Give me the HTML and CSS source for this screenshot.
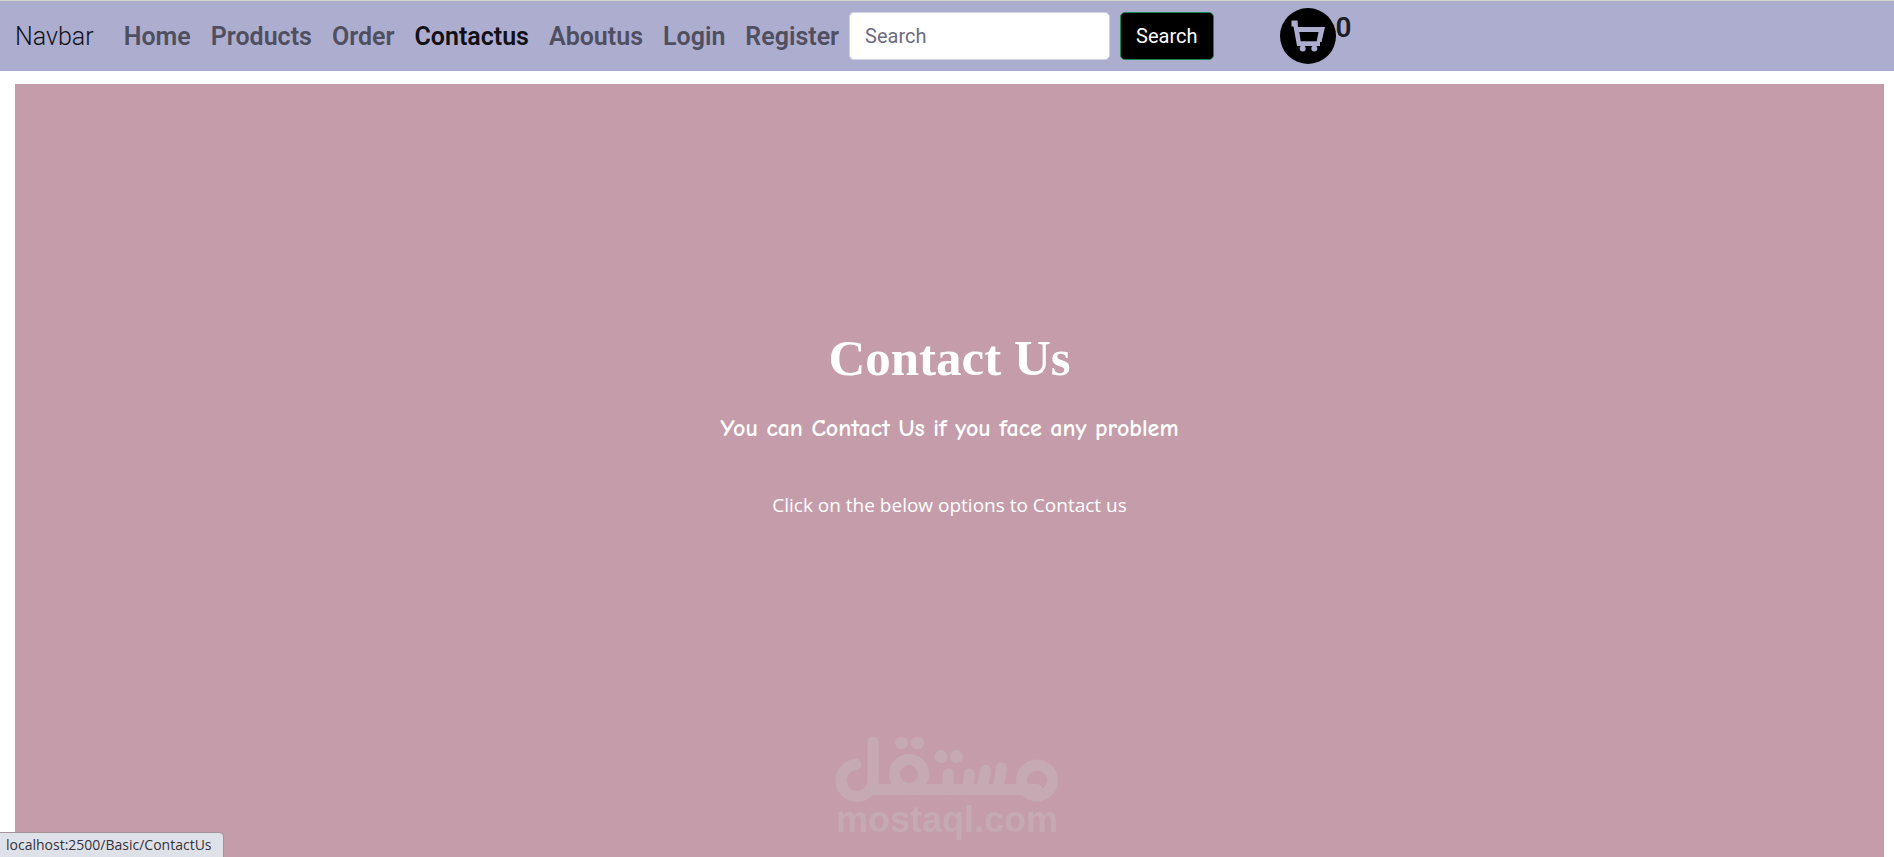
FILE: index.html
```html
<!DOCTYPE html>
<html lang="en">
<head>
<meta charset="utf-8">
<title>Contact Us</title>
<link rel="stylesheet" href="styles.css">
</head>
<body>
<header class="navbar">
  <a class="brand" href="#">Navbar</a>
  <nav class="links">
    <a href="#">Home</a>
    <a href="#">Products</a>
    <a href="#">Order</a>
    <a class="active" href="#">Contactus</a>
    <a href="#">Aboutus</a>
    <a href="#">Login</a>
    <a href="#">Register</a>
  </nav>
  <form class="search">
    <input type="search" placeholder="Search" aria-label="Search">
    <button type="button">Search</button>
  </form>
  <a class="cart" href="#" aria-label="Cart">
    <svg width="56" height="56" viewBox="0 0 56 56">
      <circle cx="28" cy="28" r="28" fill="#000"/>
      <path d="M11.500 12.500H17.500L18 19H45L41.500 34H40V38H17L13.500 18.500H11.500Z" fill="#adadd0"/>
      <path d="M19.300 24H38.500L36.700 33.300H20.700Z" fill="#000"/>
      <circle cx="22.700" cy="40.500" r="3" fill="#adadd0"/>
      <circle cx="34.300" cy="40.500" r="3" fill="#adadd0"/>
    </svg>
    <span class="count">0</span>
  </a>
</header>
<main class="hero">
  <h1>Contact Us</h1>
  <p class="lead">You can Contact Us if you face any problem</p>
  <p class="hint">Click on the below options to Contact us</p>
</main>
<div class="mark">
  <svg width="224" height="66" viewBox="0 0 224 66" fill="none" stroke="#c5aab3" stroke-width="11" stroke-linecap="round" stroke-linejoin="round" role="img" aria-label="مستقل">
    <path d="M21 28.500A16 16 0 1 0 38 44V6"/>
    <path d="M36 53.500H202"/>
    <circle cx="74" cy="38" r="14.500"/>
    <path d="M113.500 38L112.500 52M134.500 38L132.500 52M150.500 34.500L147.500 52M166.500 32L163.500 52"/>
    <circle cx="202" cy="44.500" r="15.500"/>
    <g fill="#c5aab3" stroke="none">
      <circle cx="66.500" cy="7" r="6.500"/>
      <circle cx="82.500" cy="7" r="6.500"/>
      <circle cx="106" cy="20.500" r="6.500"/>
      <circle cx="121.500" cy="20.500" r="6.500"/>
    </g>
  </svg>
  <span>mostaql.com</span>
</div>
<div class="status">localhost:2500/Basic/ContactUs</div>
</body>
</html>
```
FILE: styles.css
```css
* { box-sizing: border-box; }
html { height: 100%; }
body {
  margin: 0;
  min-height: 100%;
  display: flex;
  flex-direction: column;
  background: #fff;
  font-family: Roboto, sans-serif;
  font-size: 20px;
}
a { text-decoration: none; color: inherit; }
.navbar {
  display: flex;
  align-items: center;
  height: 71px;
  padding: 0 15px;
  border-top: 1px solid #d6d6d0;
  background: #adadd0;
}
.brand {
  margin-right: 20px;
  font-size: 25px;
  font-weight: 300;
  color: #111116;
}
.links { display: flex; }
.links a {
  padding: 0 10px;
  font-size: 25px;
  font-weight: 600;
  color: #4f4f60;
}
.links .active { color: #111116; }
.search { display: flex; gap: 10px; }
.search input,
.search button {
  height: 48px;
  padding: 0 15px;
  border-radius: 5px;
  font: 400 20px Roboto, sans-serif;
}
.search input {
  width: 261px;
  border: 1px solid #ced4da;
  background: #fff;
}
.search input::placeholder { color: #6c6c80; opacity: 1; }
.search button {
  border: 1px solid #198754;
  background: #000;
  color: #fff;
}
.cart {
  display: flex;
  margin-left: 66px;
}
.count {
  padding-top: 4px;
  font-size: 28px;
  line-height: 32px;
  font-weight: 600;
  color: #1d1d26;
}
.hero {
  flex: 1;
  margin: 13px 10px 0 15px;
  padding-top: 239px;
  background: #c59daa;
  color: #fff;
  text-align: center;
}
.hero h1 {
  margin: 0;
  font: 700 51px/70px "Liberation Serif", serif;
}
.lead {
  margin: 17px 0 0;
  font: 700 24px/36px "Comic Sans MS", "Comic Neue", "Open Sans", sans-serif;
}
.hint {
  margin: 44px 0 0;
  font: 400 19px/30px "Open Sans", sans-serif;
}
/* Watermark over the page, centred on the window */
.mark {
  position: fixed;
  left: 0;
  right: 0;
  bottom: 20px;
  display: flex;
  flex-direction: column;
  align-items: center;
  color: #c5aab3;
  pointer-events: none;
}
.mark span { font: 700 36px/35px "Liberation Sans", sans-serif; }
.status {
  position: fixed;
  left: 0;
  bottom: 0;
  padding: 0 11px 0 6px;
  border: solid #a5939c;
  border-width: 1px 1px 0 0;
  border-radius: 0 5px 0 0;
  background: #dfe1e8;
  color: #35333c;
  font: 400 14px/24px "Open Sans", sans-serif;
}
```
